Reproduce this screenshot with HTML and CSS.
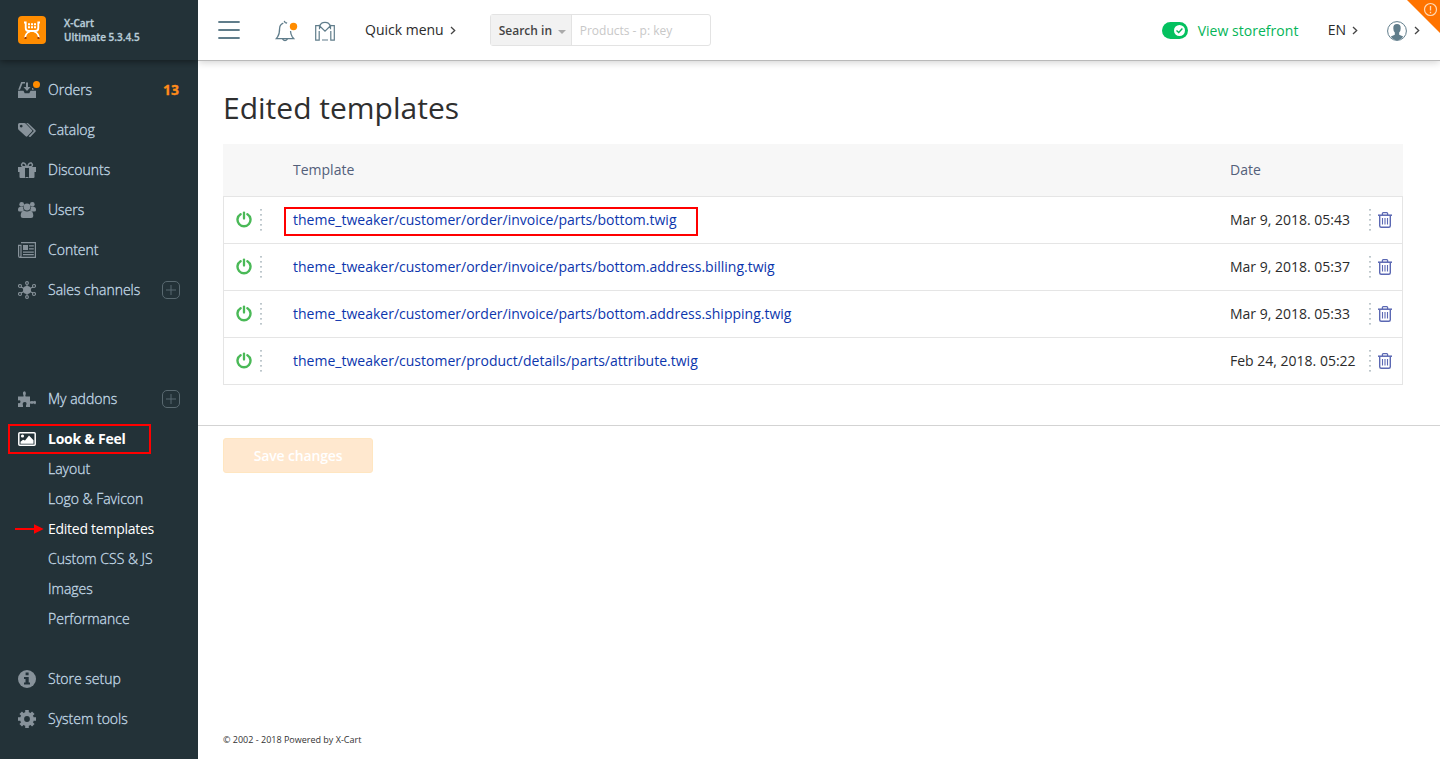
FILE: index.html
```html
<!DOCTYPE html>
<html lang="en">
<head>
<meta charset="utf-8">
<title>Edited templates</title>
<link rel="stylesheet" href="styles.css">
</head>
<body>
<svg class="defs" width="0" height="0">
  <symbol id="power" viewBox="0 0 16 17"><path d="M4.600 3.200A6.500 6.500 0 1 0 11.400 3.200" fill="none" stroke="currentColor" stroke-width="2.400" stroke-linecap="round"/><path d="M8 1.600v6" stroke="currentColor" stroke-width="2.300" stroke-linecap="round"/></symbol>
  <symbol id="trash" viewBox="0 0 14 16"><g fill="none" stroke="currentColor"><path d="M0 3.200h14" stroke-width="1.5"/><path d="M4.400 3V1.600q0-.9.900-.9h3.400q.9 0 .9.900V3" stroke-width="1.3"/><path d="M1.700 3.500v10.200q0 1.500 1.500 1.500h7.600q1.500 0 1.500-1.500V3.500" stroke-width="1.400"/><path d="M4.500 6v6.500M7 6v6.500M9.500 6v6.500" stroke-width="1.100"/></g></symbol>
  <symbol id="chev" viewBox="0 0 6 9"><path d="M1 1l3.700 3.500L1 8" fill="none" stroke="currentColor" stroke-width="1.300"/></symbol>
  <symbol id="plus" viewBox="0 0 18 18"><rect x=".5" y=".5" width="17" height="17" rx="4.500" fill="none" stroke="currentColor"/><path d="M9 4v10M4 9h10" stroke="currentColor"/></symbol>
</svg>
<div class="app">
  <aside class="sidebar">
    <div class="brand">
      <svg class="logo" viewBox="0 0 28 28"><rect width="28" height="28" rx="4" fill="#ff8c00"/><path d="M6 6.500h1.700V12q0 3 3 3h6.600q3 0 3-3V6.500H22M7 22q.5-5 5-6.500M21 22q-.5-5-5-6.500" fill="none" stroke="#fff" stroke-width="1.800"/><path d="M10 8.300h8M10 11.300h8" stroke="#fff" stroke-width="2" stroke-dasharray="2 1"/><path d="M6.500 22h2M19.500 22h2" stroke="#a33c00" stroke-width="1.800"/></svg>
      <div class="brand-text">X-Cart<br>Ultimate 5.3.4.5</div>
    </div>
    <nav class="menu main-menu">
      <a class="item"><svg class="icon" viewBox="0 0 18 18"><path d="M0 9.800h5.500l1.200 2.400h4.600l1.200-2.400H18V17H0zM3.200 1H7v1.500H4.500L2 8.800H.2zM8 1.500h2V6h2.500L9 10 5.500 6H8zM14 7h1l.8 1.800H14z" fill="currentColor"/></svg><span class="label">Orders</span><i class="dot"></i><b class="count">13</b></a>
      <a class="item"><svg class="icon" viewBox="0 0 18 18"><path fill-rule="evenodd" d="M0 3.500Q0 2 1.500 2h4.700q1 0 1.700.8l6 6.200q.8.800 0 1.600l-4.600 4.700q-.8.800-1.600 0L.8 9Q0 8.200 0 7.300zM3.200 3.700a1.400 1.400 0 1 0 .01 0zM8.200 2h1q.8 0 1.500.8l6.600 6.300q.9.900 0 1.700l-4.500 4.600q-1 1-1.900.1l-.3-.3 5.200-5.300z" fill="currentColor"/></svg><span class="label">Catalog</span></a>
      <a class="item"><svg class="icon" viewBox="0 0 18 18"><path d="M0 6h7v11H2.500Q1.500 17 1.500 16v-5H0zM11 6h7v5h-1.500v5q0 1-1 1H11zM7.500 6h3v1h-3zM7.500 16h3v1h-3z" fill="currentColor"/><path d="M8.500 6Q7 1.200 4.700 2 2.500 4 4.500 5.500zM9.500 6Q11 1.200 13.300 2q2.200 2 .2 3.500z" fill="none" stroke="currentColor" stroke-width="1.500"/></svg><span class="label">Discounts</span></a>
      <a class="item"><svg class="icon" viewBox="0 0 18 18"><g fill="currentColor"><circle cx="3.700" cy="3.400" r="2.400"/><circle cx="14.300" cy="3.400" r="2.400"/><path d="M0 9q0-3 2-3h3.200q-.4 2 .8 3.300L4 10.500H1.500Q0 10.500 0 9zM18 9q0-3-2-3h-3.200q.4 2-.8 3.300l2 1.200h2.500Q18 10.500 18 9z"/><circle cx="9" cy="6" r="3.400"/><path d="M2.700 15q0-5 3.300-5.500 3 2 6 0 3.300.5 3.300 5.500 0 2-2.300 2H5q-2.300 0-2.300-2z"/></g></svg><span class="label">Users</span></a>
      <a class="item"><svg class="icon" viewBox="0 0 18 18"><path d="M3 1.700h14.400v14.600H2Q.6 16.300.6 15V4.300H3V15q0 1-1 1" fill="none" stroke="currentColor" stroke-width="1.200"/><path d="M5 4h5v5H5zM11 4.200h4.800v1.200H11zM11 7.300h4.800v1.200H11zM5 10.500h10.800v1.200H5zM5 13h10.800v1.200H5z" fill="currentColor"/></svg><span class="label">Content</span></a>
      <a class="item"><svg class="icon" viewBox="0 0 18 18"><circle cx="9" cy="9" r="4" fill="currentColor"/><g fill="none" stroke="currentColor" stroke-width="1.100"><path d="M9 4v10M3 6l12 6M3 12l12-6"/><circle cx="9" cy="2" r="1.400"/><circle cx="9" cy="16" r="1.400"/><circle cx="2" cy="5" r="1.500"/><circle cx="16" cy="5" r="1.500"/><circle cx="2" cy="13" r="1.500"/><circle cx="16" cy="13" r="1.500"/></g></svg><span class="label">Sales channels</span><svg class="plus"><use href="#plus"/></svg></a>
    </nav>
    <nav class="menu addon-menu">
      <a class="item"><svg class="icon" viewBox="0 0 18 18"><path d="M0 6.500h5.200q.7 0 .3-1Q4 2 6.200 1.300 8.600 1.500 7.500 5q-.6 1.500.5 1.500h4v4.200q0 1 1 .6 1-.8 2 0h1q.7-1 1.500-.4 1 1.600 0 3.100-.8.500-1.500-.4h-1q-1 .6-2 0-1-.5-1 .6V17H8v-1.500q1.500-3.500-1.300-3.500T5 15.500V17H0v-4q2.500.8 2.500-1.200T0 10.500z" fill="currentColor"/></svg><span class="label">My addons</span><svg class="plus"><use href="#plus"/></svg></a>
      <a class="item active"><svg class="icon" viewBox="0 0 18 18"><rect x=".8" y="2.700" width="16.400" height="12.600" rx="1" fill="none" stroke="currentColor" stroke-width="1.500"/><circle cx="4.500" cy="6" r="1.600" fill="currentColor"/><path d="M2.500 13.800v-2l2.500-2 2 .8 4-5.100 4.500 4.700v3.600z" fill="currentColor"/></svg><span class="label">Look &amp; Feel</span></a>
      <a class="sub">Layout</a>
      <a class="sub">Logo &amp; Favicon</a>
      <a class="sub current">Edited templates<svg class="arrow" viewBox="0 0 29 10"><path d="M0 5h20" stroke="#f00" stroke-width="2"/><path d="M19 .3 28.700 5 19 9.700z" fill="#f00"/></svg></a>
      <a class="sub">Custom CSS &amp; JS</a>
      <a class="sub">Images</a>
      <a class="sub">Performance</a>
    </nav>
    <nav class="menu setup-menu">
      <a class="item"><svg class="icon" viewBox="0 0 18 18"><circle cx="9" cy="9" r="9" fill="currentColor"/><path d="M7.600 2.500h3v2.700h-3zM6 7h4.700v5.500H12v2H6v-2h1.500V9H6z" fill="#23323a"/></svg><span class="label">Store setup</span></a>
      <a class="item"><svg class="icon" viewBox="0 0 18 18"><circle cx="9" cy="9" r="4.900" fill="none" stroke="currentColor" stroke-width="4"/><path d="M9 0v4M9 14v4M0 9h4M14 9h4M2.700 2.700l2.800 2.800M12.500 12.500l2.800 2.800M15.300 2.700l-2.800 2.800M5.500 12.500l-2.800 2.800" stroke="currentColor" stroke-width="3.600"/></svg><span class="label">System tools</span></a>
    </nav>
  </aside>
  <div class="page">
    <header class="topbar">
      <svg class="burger" viewBox="0 0 22 18"><path d="M1 1h20M1 9h20M1 17h20" stroke="#607d8b" stroke-width="1.800" stroke-linecap="round"/></svg>
      <svg class="bell" viewBox="0 0 24 22"><g fill="none" stroke="#607d8b" stroke-width="1.300"><path d="M8.300 3.200Q4.800 4.500 4.600 8.500 4.600 14 2.600 16.800L1.200 18.700h17.600L17.300 16.800Q15.700 14.500 15.500 11"/><path d="M7.500 19q2.500 3 5 0M9.300.8q.2 1.200 1 1.800l1.800.4"/></g><circle cx="18.500" cy="6.500" r="3.700" fill="#ff8c00"/></svg>
      <svg class="market" viewBox="0 0 20 20"><g fill="none" stroke="#607d8b" stroke-width="1.200"><path d="M4.800 5.300A5.300 4.800 0 0 1 15.200 5.300M4 4.600H.7v14.600h3.500V10M16 4.600h3.300v14.600h-3.500V10M4.500 8.300V4.800l5.500 5.400 5.500-5.400v3.500M7 19h6"/></g></svg>
      <a class="quick">Quick menu <svg class="chev"><use href="#chev"/></svg></a>
      <div class="search"><span class="search-in">Search in<i class="caret"></i></span><span class="placeholder">Products - p: key</span></div>
      <svg class="toggle" viewBox="0 0 26 17"><rect width="26" height="17" rx="8.500" fill="#04c15f"/><circle cx="17.500" cy="8.500" r="5.500" fill="#fff"/><path d="M14.500 8.600l2.200 2 3.700-4" fill="none" stroke="#04b35a" stroke-width="1.400"/></svg>
      <a class="storefront">View storefront</a>
      <a class="lang">EN <svg class="chev"><use href="#chev"/></svg></a>
      <svg class="user" viewBox="0 0 20 20"><circle cx="10" cy="10" r="9.400" fill="#fff" stroke="#607d8b" stroke-width="1"/><path d="M10 3q3.800 0 3.700 4.200 0 3-1.500 4.300v2.200l4 1.800Q13.500 19.300 10 19.300T3.800 15.500l4-1.800v-2.200Q6.300 10.200 6.300 7.200 6.200 3 10 3z" fill="#607d8b"/></svg>
      <svg class="chev user-chev"><use href="#chev"/></svg>
    </header>
    <main class="content">
      <h1>Edited templates</h1>
      <div class="table">
        <div class="thead"><span class="name">Template</span><span class="date">Date</span></div>
        <div class="row"><svg class="power"><use href="#power"/></svg><i class="dots"></i><a class="name marked">theme_tweaker/customer/order/invoice/parts/bottom.twig</a><span class="date">Mar 9, 2018. 05:43</span><i class="dots"></i><svg class="trash"><use href="#trash"/></svg></div>
        <div class="row"><svg class="power"><use href="#power"/></svg><i class="dots"></i><a class="name">theme_tweaker/customer/order/invoice/parts/bottom.address.billing.twig</a><span class="date">Mar 9, 2018. 05:37</span><i class="dots"></i><svg class="trash"><use href="#trash"/></svg></div>
        <div class="row"><svg class="power"><use href="#power"/></svg><i class="dots"></i><a class="name">theme_tweaker/customer/order/invoice/parts/bottom.address.shipping.twig</a><span class="date">Mar 9, 2018. 05:33</span><i class="dots"></i><svg class="trash"><use href="#trash"/></svg></div>
        <div class="row"><svg class="power"><use href="#power"/></svg><i class="dots"></i><a class="name">theme_tweaker/customer/product/details/parts/attribute.twig</a><span class="date">Feb 24, 2018. 05:22</span><i class="dots"></i><svg class="trash"><use href="#trash"/></svg></div>
      </div>
    </main>
    <div class="actions"><button class="save">Save changes</button></div>
    <footer class="footer">© 2002 - 2018 Powered by X-Cart</footer>
  </div>
  <svg class="corner" viewBox="0 0 33 33"><path d="M0 0h33v33z" fill="#ff7300"/><circle cx="23.500" cy="9.500" r="6" fill="none" stroke="#ffd9b5" stroke-width="1.200"/><path d="M23.500 6v4.500M23.500 11.700v1.500" stroke="#ffd9b5" stroke-width="1.300"/></svg>
</div>
</body>
</html>
```
FILE: styles.css
```css
* { box-sizing: border-box; }
body { margin: 0; font: 14px/20px "Open Sans", sans-serif; color: #2b2b2b; background: #fff; }
svg { display: block; flex: none; }
.defs { position: absolute; }
.app { position: relative; display: flex; height: 759px; overflow: hidden; }

.sidebar { width: 198px; flex: none; background: #233238; color: #c3d9e6; display: flex; flex-direction: column; }
.brand { height: 60px; flex: none; display: flex; align-items: center; padding-left: 18px; gap: 18px; box-shadow: 0 1px 7px rgba(0,0,0,.5); clip-path: inset(0 0 -8px 0); }
.logo { width: 28px; height: 28px; }
.brand-text { font-size: 10px; line-height: 14px; font-weight: 600; color: #b9cdd9; -webkit-text-stroke: .3px; }
.menu { display: flex; flex-direction: column; }
.main-menu { padding-top: 10px; }
.addon-menu { padding-top: 69px; }
.setup-menu { padding-top: 25px; }
.item { height: 40px; display: flex; align-items: center; position: relative; padding: 0 18px; font-weight: 300; -webkit-text-stroke: .3px; }
.icon { width: 18px; height: 18px; margin-right: 12px; color: #87929a; }
.label { flex: 1; white-space: nowrap; }
.count { color: #ff8c1a; font-weight: 700; margin-right: 1px; }
.dot { position: absolute; left: 33px; top: 11px; width: 7px; height: 7px; border-radius: 50%; background: #ff8c00; }
.plus { width: 18px; height: 18px; color: #596970; }
.item.active { height: 30px; width: 143px; margin: 5px 0 0 8px; padding: 0 8px; border: 2px solid #f00; color: #fff; font-weight: 700; letter-spacing: -.25px; -webkit-text-stroke: 0; }
.active .icon { color: #fff; }
.sub { height: 30px; display: flex; align-items: center; padding-left: 48px; font-weight: 300; position: relative; -webkit-text-stroke: .3px; }
.sub.current { color: #fff; font-weight: 400; letter-spacing: -.26px; -webkit-text-stroke: 0; }
.arrow { position: absolute; left: 15px; top: 10px; width: 29px; height: 10px; }

.page { flex: 1; display: flex; flex-direction: column; min-width: 0; }
.topbar { height: 61px; flex: none; display: flex; align-items: center; padding: 0 20px; border-bottom: 1px solid #b9b9b9; box-shadow: 0 1px 8px rgba(0,0,0,.2); clip-path: inset(0 0 -12px 0); }
.burger { width: 22px; height: 18px; }
.bell { width: 24px; height: 22px; margin: 2px 0 0 35px; }
.market { width: 20px; height: 20px; margin: 2px 0 0 16px; }
.quick, .lang { display: flex; align-items: center; }
.quick { margin-left: 30px; gap: 6px; }
.chev { width: 6px; height: 9px; color: #444; }
.search { display: flex; width: 221px; height: 32px; margin-left: 34px; border: 1px solid #e3e3e3; border-radius: 3px; font-size: 12px; line-height: 31px; }
.search-in { width: 81px; padding-left: 8px; background: #f2f2f2; border-right: 1px solid #e3e3e3; color: #444; font-weight: 600; display: flex; align-items: center; gap: 6px; white-space: nowrap; }
.caret { border: 4px solid transparent; border-top-color: #aaa; border-bottom: 0; margin-top: 3px; }
.placeholder { padding-left: 8px; color: #c8c8c8; }
.toggle { width: 26px; height: 17px; margin-left: auto; }
.storefront { margin: 1px 0 0 10px; width: 130px; color: #04b558; letter-spacing: .03px; white-space: nowrap; }
.lang { gap: 6px; }
.user { width: 20px; height: 20px; margin: 2px 0 0 29px; }
.user-chev { margin-left: 7px; }
.corner { position: absolute; right: 0; top: 0; width: 33px; height: 33px; }

.content { height: 364px; flex: none; padding: 26px 37px 0 25px; }
h1 { margin: 0 0 15px; font-size: 30px; line-height: 42px; font-weight: 400; color: #2f2f2f; }
.thead { height: 52px; background: #f7f7f7; color: #53607a; display: flex; align-items: center; padding-left: 70px; }
.name { flex: 1; }
.date { width: 139px; white-space: nowrap; }
.thead .date { width: 173px; }
.row { height: 47px; display: flex; align-items: center; border: 1px solid #e5e5e5; border-bottom: 0; padding: 0 10px 0 12px; }
.row:last-child { height: 48px; border-bottom: 1px solid #e5e5e5; }
.row .name { color: #0c36ad; padding-left: 31px; position: relative; letter-spacing: .008px; }
.marked::after { content: ""; box-sizing: border-box; position: absolute; left: 22px; top: -3px; width: 414px; height: 29px; border: 2px solid #f00; }
.power { width: 16px; height: 17px; color: #4ab957; margin-top: -2px; }
.dots { width: 2px; height: 22px; margin-left: 8px; background: repeating-linear-gradient(#bdc7cc 0 1px, #d5dbde 1px 2px, transparent 2px 5px); }
.date + .dots { margin-left: 0; }
.trash { width: 14px; height: 16px; color: #5b68b3; margin: -1px 0 0 7px; }
.actions { border-top: 1px solid #d3d3d3; padding: 12px 25px; }
.save { display: block; width: 150px; height: 35px; border: 1px solid #ffe6c1; border-radius: 3px; padding: 0; background: #ffe8cf; color: #fff; font: 600 14px/20px "Open Sans", sans-serif; letter-spacing: -.15px; }
.footer { margin-top: auto; padding: 0 25px 10px; font-size: 9px; line-height: 18px; color: #333; }
```
